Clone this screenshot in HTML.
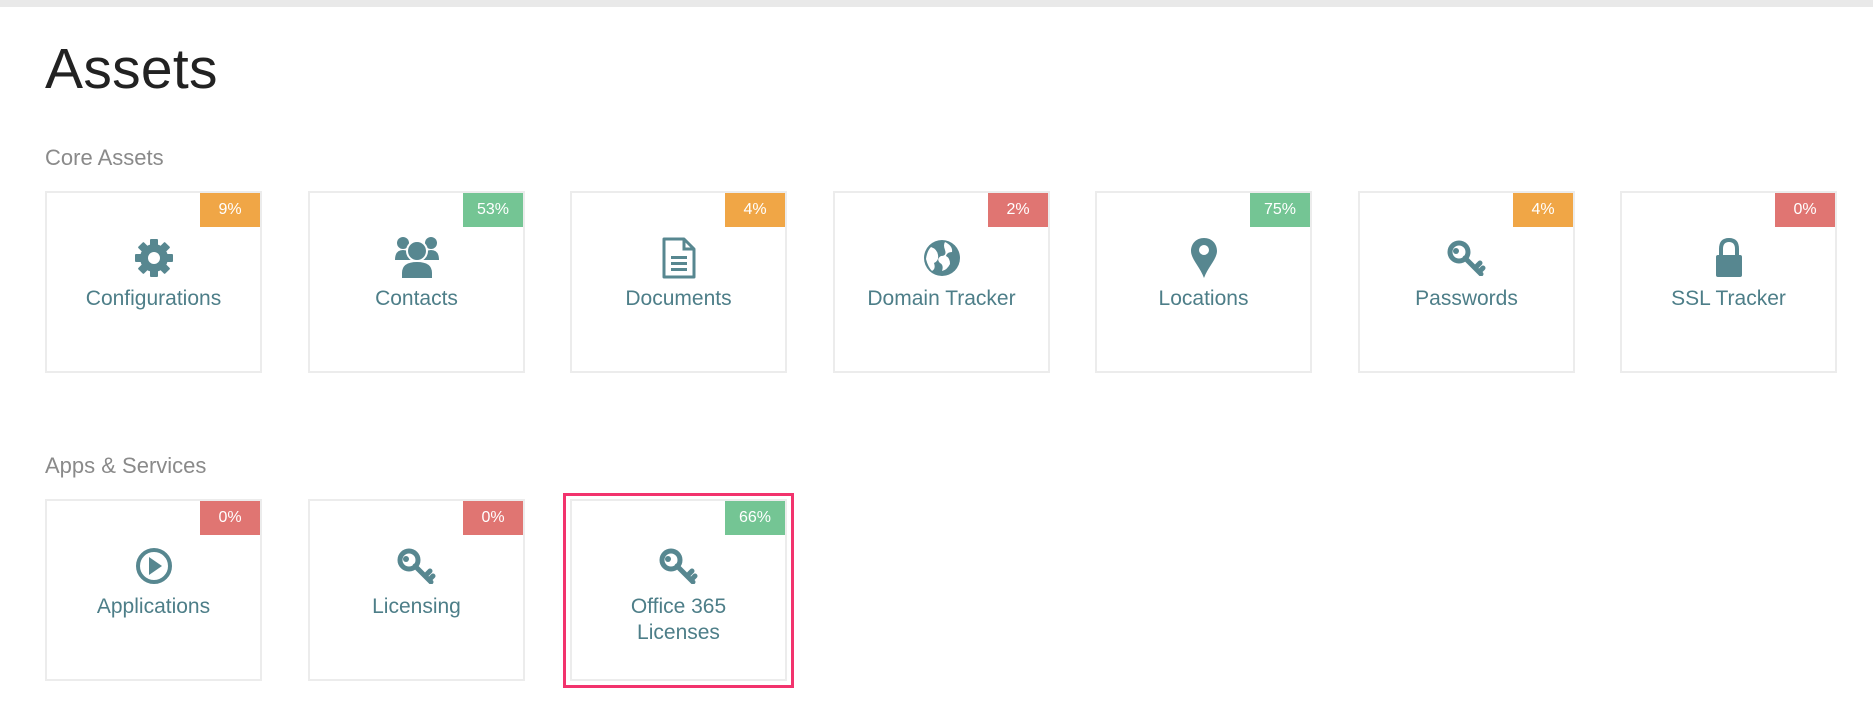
<!DOCTYPE html>
<html><head><meta charset="utf-8"><style>
*{margin:0;padding:0;box-sizing:border-box}
body{width:1873px;height:703px;background:#fff;position:relative;overflow:hidden;font-family:"Liberation Sans",sans-serif}
.bar{position:absolute;left:0;top:0;width:1873px;height:7px;background:#e9e9e9}
h1{position:absolute;left:45px;top:36px;font-size:57px;font-weight:normal;color:#222;letter-spacing:0.3px}
.sec{position:absolute;left:45px;font-size:22px;color:#8a8a8a}
.card{position:absolute;width:217px;height:182px;border:2px solid #ececec;background:#fff}
.b{position:absolute;right:0;top:0;width:60px;height:34px;color:#fff;font-size:16px;text-align:center;line-height:34px}
.o{background:#f0a646}.g{background:#74c594}.r{background:#e07572}
.ic{position:absolute;left:0;right:0;top:44px;height:42px;display:flex;justify-content:center;align-items:center}
.lb{position:absolute;left:0;right:0;top:93px;text-align:center;font-size:21px;color:#4d7e88;line-height:26px}
svg{fill:#578790}
.pink{position:absolute;left:563px;top:493px;width:231px;height:195px;border:3px solid #f2336d}
</style></head><body>
<div class="bar"></div>
<h1>Assets</h1>
<div class="sec" style="top:145px">Core Assets</div>

<div class="card" style="left:45px;top:191px"><div class="b o">9%</div>
<div class="ic"><svg width="38" height="38" viewBox="-19 -19 38 38"><g><rect x="-4" y="-19" width="8" height="38" rx="1"/><rect x="-4" y="-19" width="8" height="38" rx="1" transform="rotate(45)"/><rect x="-4" y="-19" width="8" height="38" rx="1" transform="rotate(90)"/><rect x="-4" y="-19" width="8" height="38" rx="1" transform="rotate(135)"/><circle r="14"/></g><circle r="6" fill="#fff"/></svg></div>
<div class="lb">Configurations</div></div>

<div class="card" style="left:308px;top:191px"><div class="b g">53%</div>
<div class="ic"><svg width="46" height="44" viewBox="0 0 46 44"><circle cx="9" cy="7" r="6"/><circle cx="37" cy="7" r="6"/><path d="M1 24q0-10 8-10t8 10z"/><path d="M29 24q0-10 8-10t8 10z"/><circle cx="23" cy="15" r="10" stroke="#fff" stroke-width="2"/><path d="M7 43v-6q0-12 16-12t16 12v6z" stroke="#fff" stroke-width="2"/></svg></div>
<div class="lb">Contacts</div></div>

<div class="card" style="left:570px;top:191px"><div class="b o">4%</div>
<div class="ic"><svg width="34" height="42" viewBox="0 0 34 42"><path d="M2 2h20l10 10v28H2z" fill="none" stroke="#578790" stroke-width="3" stroke-linejoin="round"/><path d="M22 2v10h10" fill="none" stroke="#578790" stroke-width="3"/><rect x="9" y="19" width="16" height="3"/><rect x="9" y="25" width="16" height="3"/><rect x="9" y="31" width="16" height="3"/></svg></div>
<div class="lb">Documents</div></div>

<div class="card" style="left:833px;top:191px"><div class="b r">2%</div>
<div class="ic"><svg width="38" height="38" viewBox="0 0 38 38"><circle cx="19" cy="19" r="18"/><path d="M8 8q6 2 7 8t-4 8q2 6-2 8-4-4-6-12 1-8 5-12zM22 3q8 4 7 10-5 0-6 4 4 2 4 8-3 6-8 7 2-6-2-8-4-4 1-7 6 0 4-6-2-5 0-8z" fill="#fff"/></svg></div>
<div class="lb">Domain Tracker</div></div>

<div class="card" style="left:1095px;top:191px"><div class="b g">75%</div>
<div class="ic"><svg width="28" height="42" viewBox="0 0 28 42"><path d="M14 1C6 1 1 7 1 14c0 8 9 16 13 27 4-11 13-19 13-27C27 7 22 1 14 1z"/><circle cx="14" cy="13" r="5" fill="#fff"/></svg></div>
<div class="lb">Locations</div></div>

<div class="card" style="left:1358px;top:191px"><div class="b o">4%</div>
<div class="ic"><svg width="40" height="36" viewBox="0 0 40 36"><circle cx="12" cy="12" r="9" fill="none" stroke="#578790" stroke-width="5"/><circle cx="9" cy="11" r="3"/><path d="M18 18l16 16M28 28l5-5M32 32l4-4" stroke="#578790" stroke-width="5" stroke-linecap="round" fill="none"/></svg></div>
<div class="lb">Passwords</div></div>

<div class="card" style="left:1620px;top:191px"><div class="b r">0%</div>
<div class="ic"><svg width="30" height="40" viewBox="0 0 30 40"><path d="M7 18v-7q0-9 8-9t8 9v7" fill="none" stroke="#578790" stroke-width="4"/><rect x="2" y="17" width="26" height="22" rx="2"/></svg></div>
<div class="lb">SSL Tracker</div></div>

<div class="sec" style="top:453px">Apps &amp; Services</div>

<div class="card" style="left:45px;top:499px"><div class="b r">0%</div>
<div class="ic"><svg width="38" height="38" viewBox="0 0 38 38"><circle cx="19" cy="19" r="16" fill="none" stroke="#578790" stroke-width="4"/><path d="M14 10l13 9-13 9z"/></svg></div>
<div class="lb">Applications</div></div>

<div class="card" style="left:308px;top:499px"><div class="b r">0%</div>
<div class="ic"><svg width="40" height="36" viewBox="0 0 40 36"><circle cx="12" cy="12" r="9" fill="none" stroke="#578790" stroke-width="5"/><circle cx="9" cy="11" r="3"/><path d="M18 18l16 16M28 28l5-5M32 32l4-4" stroke="#578790" stroke-width="5" stroke-linecap="round" fill="none"/></svg></div>
<div class="lb">Licensing</div></div>

<div class="card" style="left:570px;top:499px"><div class="b g">66%</div>
<div class="ic"><svg width="40" height="36" viewBox="0 0 40 36"><circle cx="12" cy="12" r="9" fill="none" stroke="#578790" stroke-width="5"/><circle cx="9" cy="11" r="3"/><path d="M18 18l16 16M28 28l5-5M32 32l4-4" stroke="#578790" stroke-width="5" stroke-linecap="round" fill="none"/></svg></div>
<div class="lb">Office 365<br>Licenses</div></div>
<div class="pink"></div>
</body></html>
